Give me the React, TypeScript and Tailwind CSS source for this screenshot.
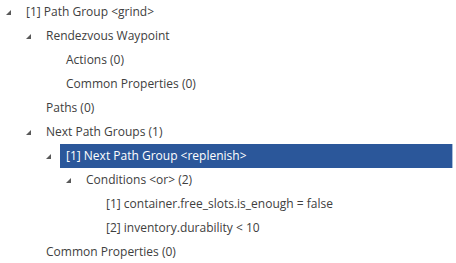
import React from "react";

type Row = { level: number; text: string; expanded?: boolean; selected?: boolean };

const rows: Row[] = [
  { level: 0, text: "[1] Path Group <grind>", expanded: true },
  { level: 1, text: "Rendezvous Waypoint", expanded: true },
  { level: 2, text: "Actions (0)" },
  { level: 2, text: "Common Properties (0)" },
  { level: 1, text: "Paths (0)" },
  { level: 1, text: "Next Path Groups (1)", expanded: true },
  { level: 2, text: "[1] Next Path Group <replenish>", expanded: true, selected: true },
  { level: 3, text: "Conditions <or> (2)", expanded: true },
  { level: 4, text: "[1] container.free_slots.is_enough = false" },
  { level: 4, text: "[2] inventory.durability < 10" },
  { level: 1, text: "Common Properties (0)" },
];

const pad = ["pl-0", "pl-[20px]", "pl-[40px]", "pl-[60px]", "pl-[80px]"];

function Arrow() {
  return (
    <svg width="5" height="5" viewBox="0 0 5 5" className="block">
      <path d="M5 0 L5 5 L0 5 Z" fill="#595959" />
    </svg>
  );
}

export default function App() {
  return (
    <div
      className="w-[456px] h-[263px] bg-white overflow-hidden text-[12px] text-[#404040]"
      style={{ fontFamily: '"Open Sans", "Noto Sans", sans-serif' }}
    >
      {rows.map((r, i) => (
        <div key={i} className={`flex h-[24px] items-center ${pad[r.level]}`}>
          <div className="w-[20px] flex justify-end pr-[9px] shrink-0">
            {r.expanded ? <Arrow /> : null}
          </div>
          {r.selected ? (
            <div className="flex-1 mr-[3px] h-[24px] flex items-center bg-[#2b579a] text-white pl-[6px] border-r border-[#a9bcd9]">
              {r.text}
            </div>
          ) : (
            <div className="pl-[6px] whitespace-nowrap">{r.text}</div>
          )}
        </div>
      ))}
    </div>
  );
}
